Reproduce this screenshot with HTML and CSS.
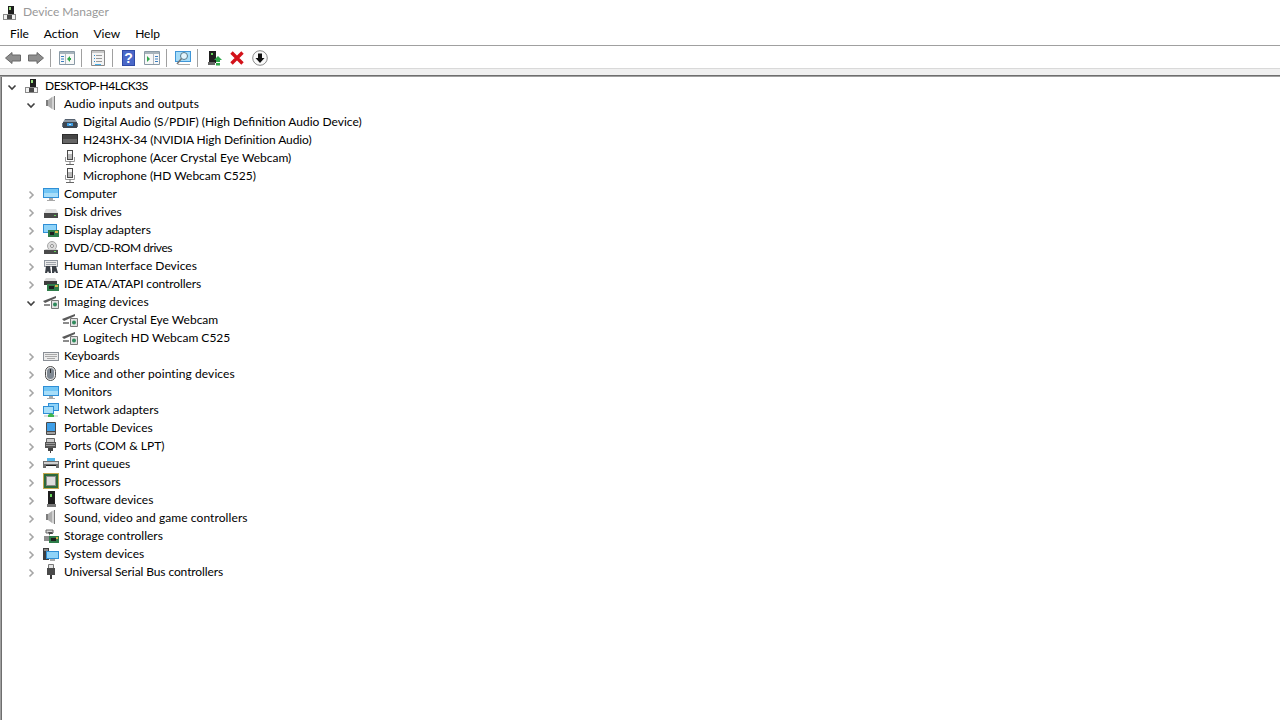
FILE: index.html
```html
<!DOCTYPE html>
<html lang="en">
<head>
<meta charset="utf-8">
<title>Device Manager</title>
<link rel="stylesheet" href="styles.css">
</head>
<body>
<svg class="defs" aria-hidden="true">
<defs>
<symbol id="c-closed" viewBox="0 0 16 16"><path d="M6.500 4.500L10 8l-3.500 3.500" fill="none" stroke="#a6a6a6" stroke-width="1.600"/></symbol>
<symbol id="c-open" viewBox="0 0 16 16"><path d="M4.500 6.500L8 10l3.500-3.500" fill="none" stroke="#404040" stroke-width="1.600"/></symbol>
<symbol id="i-pc" viewBox="0 0 16 16"><path d="M6 2h6v8H6z" fill="#1e1e1e"/><path d="M7 3h2v3H7z" fill="#9adf7f"/><path d="M1 10h13v6H1z" fill="#8a8a8a"/><path d="M2 11h3v4H2zM10 11h3v4h-3z" fill="#f2f2f2"/><path d="M5 11h5v4H5z" fill="#4b4b4b"/></symbol>
<symbol id="i-speaker" viewBox="0 0 16 16"><path d="M3 5h2v6H3z" fill="#7d7d7d"/><path d="M5 5l4-3v12l-4-3z" fill="#aeaeae"/><path d="M9 2l3-1v14l-3-1z" fill="#d2d2d2"/><path d="M11 1h1v14h-1z" fill="#7d7d7d"/></symbol>
<symbol id="i-digital" viewBox="0 0 16 16"><path d="M3 6h10l2 3H1z" fill="#8c98a4"/><path d="M3 6h10v1H3z" fill="#566270"/><path d="M1 9h14v6H1z" fill="#3e4852"/><path d="M0 10h1v4H0zM15 10h1v4h-1z" fill="#6b7682"/><path d="M5 10h6v3H5z" fill="#3d9be0"/><path d="M7 11h2v1H7z" fill="#bfe3fa"/></symbol>
<symbol id="i-hdmi" viewBox="0 0 16 16"><path d="M0 3h16v10H0z" fill="#2e2e2e"/><path d="M1 4h14v4H1z" fill="#454545"/><path d="M1 8h14v4H1z" fill="#666"/></symbol>
<symbol id="i-mic" viewBox="0 0 16 16"><path d="M5 1h6v10H5z" fill="#4a4a4a"/><path d="M6 2h4v3H6z" fill="#f6f6f6"/><path d="M6 5h4v5H6z" fill="#b9b9b9"/><path d="M3.500 8v4.500h9V8" fill="none" stroke="#9a9a9a"/><path d="M8 12v3" stroke="#777"/><path d="M4 15.500h8" stroke="#666"/></symbol>
<symbol id="i-computer" viewBox="0 0 16 16"><path d="M0 3h16v10H0z" fill="#2f8fd6"/><path d="M1 4h14v4H1z" fill="#73c6f5"/><path d="M1 8h14v4H1z" fill="#a8def9"/><path d="M6 13h4v2h2v1H4v-1h2z" fill="#a8a8a8"/></symbol>
<symbol id="i-disk" viewBox="0 0 16 16"><path d="M3 6h10l2 4H1z" fill="#e0e0e0"/><path d="M1 10h14v5H1z" fill="#4a4a4a"/><path d="M11 12h2v1h-2z" fill="#65d35a"/></symbol>
<symbol id="i-display" viewBox="0 0 16 16"><path d="M0 3h14v9H0z" fill="#2f8fd6"/><path d="M1 4h12v7H1z" fill="#8fd3f8"/><path d="M5 9h11v7H5z" fill="#2f7d4a"/><path d="M7 11h4v3H7z" fill="#1e1e1e"/><path d="M12 10h3v2h-3z" fill="#d9b64a"/></symbol>
<symbol id="i-dvd" viewBox="0 0 16 16"><circle cx="9" cy="7" r="4.500" fill="#dedede" stroke="#a8a8a8"/><circle cx="9" cy="7" r="1.500" fill="#fff" stroke="#8c8c8c"/><path d="M3 10h10l2 1H1z" fill="#ccc"/><path d="M1 11h14v4H1z" fill="#4a4a4a"/><path d="M11 12h2v1h-2z" fill="#65d35a"/></symbol>
<symbol id="i-hid" viewBox="0 0 16 16"><path d="M1 3h14v7H1z" fill="#8e959e"/><path d="M2 4h12v5H2z" fill="#e9e9e9"/><path d="M3 5h10v1H3zM3 7h10v1H3z" fill="#9fa4ab"/><path d="M3 9h4l1 7H6l-1-2-1 2H2zM9 9h4l2 7h-2l-1-2-1 2H9z" fill="#3a3f46"/></symbol>
<symbol id="i-ide" viewBox="0 0 16 16"><path d="M3 3h9l2 3H1z" fill="#dcdcdc"/><path d="M1 6h13v4H1z" fill="#3e3e3e"/><path d="M4 9h12v7H4z" fill="#2f7d4a"/><path d="M6 11h5v3H6z" fill="#1e1e1e"/><path d="M12 10h3v2h-3z" fill="#d9b64a"/></symbol>
<symbol id="i-cam" viewBox="0 0 16 16"><path d="M0 8L13 3v2L2 10z" fill="#5a5a5a"/><path d="M1 11h6v2H1z" fill="#8c8c8c"/><path d="M8.500 7.500h7v8h-7z" fill="#e2e2e2" stroke="#777"/><circle cx="12" cy="11.500" r="2" fill="#2f8a5c"/></symbol>
<symbol id="i-kbd" viewBox="0 0 16 16"><path d="M0 5h16v9H0z" fill="#8a8f96"/><path d="M1 6h14v7H1z" fill="#ececec"/><path d="M2 7h12v1H2zM2 9h12v1H2zM4 11h8v1H4z" fill="#a8a8a8"/></symbol>
<symbol id="i-mouse" viewBox="0 0 16 16"><rect x="2.500" y="1.500" width="10" height="14" rx="5" fill="#eee" stroke="#4a4a4a"/><rect x="4" y="3" width="7" height="11" rx="3.500" fill="#7f8892"/><path d="M7 4h1v4H7z" fill="#2a2a2a"/></symbol>
<symbol id="i-monitor" viewBox="0 0 16 16"><path d="M0 3h16v10H0z" fill="#2f8fd6"/><path d="M1 4h14v4H1z" fill="#73c6f5"/><path d="M1 8h14v4H1z" fill="#a8def9"/><path d="M6 13h4v2h2v1H4v-1h2z" fill="#a8a8a8"/></symbol>
<symbol id="i-net" viewBox="0 0 16 16"><path d="M5 2h11v8H5z" fill="#2f8fd6"/><path d="M6 3h9v6H6z" fill="#8fd3f8"/><path d="M0 5h11v8H0z" fill="#2f8fd6"/><path d="M1 6h9v6H1z" fill="#a8def9"/><path d="M1 14h14v2H1z" fill="#ddd"/><path d="M8 12l3 2v2H5v-2z" fill="#3fb54d"/></symbol>
<symbol id="i-portable" viewBox="0 0 16 16"><rect x="3" y="3" width="10" height="13" rx="1" fill="#4a4a4a"/><path d="M4 4h8v8H4z" fill="#3f9fe8"/><path d="M4 13h8v2H4z" fill="#a0a0a0"/></symbol>
<symbol id="i-port" viewBox="0 0 16 16"><path d="M3.500 1.500h8v4h-8z" fill="#ccc" stroke="#666"/><path d="M2 5h11v6H2z" fill="#555"/><path d="M3 6h9v1H3zM3 8h9v1H3z" fill="#999"/><path d="M5 11h5v3H5z" fill="#444"/><path d="M7 14h1v2H7z" fill="#444"/></symbol>
<symbol id="i-print" viewBox="0 0 16 16"><path d="M4 3h8v4H4z" fill="#4fb6ea"/><path d="M0 6h16v7H0z" fill="#6f6f6f"/><path d="M1 7h14v2H1z" fill="#d0d0d0"/><path d="M3 10h10v4H3z" fill="#fafafa"/><path d="M3 10h10v1H3z" fill="#1e1e1e"/></symbol>
<symbol id="i-cpu" viewBox="0 0 16 16"><path d="M0 0h16v16H0z" fill="#c3a84e"/><path d="M1 1h14v14H1z" fill="#2d6a3c"/><path d="M3 3h10v10H3z" fill="#8a8a8a"/><path d="M4 4h8v8H4z" fill="#dedede"/></symbol>
<symbol id="i-soft" viewBox="0 0 16 16"><path d="M5 0h7v14H5z" fill="#1e1e1e"/><path d="M7 3h2v3H7z" fill="#65d35a"/><path d="M4 13h9v3H4z" fill="#777"/></symbol>
<symbol id="i-storage" viewBox="0 0 16 16"><path d="M3 3h7v3H3z" fill="#d8d8d8" stroke="#666"/><path d="M5 5h4l1 2H7v2z" fill="#4a4a4a"/><path d="M1 9h6v5H1z" fill="#8c8c8c"/><path d="M6 9h10v7H6z" fill="#2f7d4a"/><path d="M8 11h5v3H8z" fill="#1e1e1e"/><path d="M13 10h2v2h-2z" fill="#d9b64a"/></symbol>
<symbol id="i-system" viewBox="0 0 16 16"><path d="M0 3h6v12H0z" fill="#3e3e3e"/><path d="M1 4h4v2H1z" fill="#8c8c8c"/><path d="M3 6h13v8H3z" fill="#2f8fd6"/><path d="M4 7h11v6H4z" fill="#8fd3f8"/><path d="M7 14h5v2H7z" fill="#aaa"/></symbol>
<symbol id="i-usb" viewBox="0 0 16 16"><path d="M5.500 1.500h5v4h-5z" fill="#e4e4e4" stroke="#777"/><path d="M4 5h8v7H4z" fill="#4a4a4a"/><path d="M7 12h2v4H7z" fill="#3a3a3a"/></symbol>
<symbol id="t-back" viewBox="0 0 16 16"><path d="M.5 8L7 2.500V5h8.500v6H7v2.500z" fill="#8e8e8e" stroke="#696969"/></symbol>
<symbol id="t-fwd" viewBox="0 0 16 16"><path d="M15.500 8L9 2.500V5H.5v6H9v2.500z" fill="#8e8e8e" stroke="#696969"/></symbol>
<symbol id="t-tree-l" viewBox="0 0 16 16"><path d="M.5 1.500h15v13H.5z" fill="#f8f8f8" stroke="#8a9aa6"/><path d="M1 2h14v2H1z" fill="#a8b4bc"/><path d="M2 6h3v1H2zM2 8.500h3v1H2zM2 11h3v1H2z" fill="#3a7fc0"/><path d="M6.500 4v10" stroke="#b0b8c0"/><path d="M8 9l3-3v6z" fill="#2fa84a"/><path d="M11 8h1v2h-1z" fill="#2fa84a"/></symbol>
<symbol id="t-props" viewBox="0 0 16 16"><path d="M1.500 .5h13v15h-13z" fill="#f4f4f4" stroke="#8a8a8a"/><path d="M2 1h12v2H2z" fill="#c8c8c8"/><path d="M4 5h1v1H4zM4 8h1v1H4zM4 11h1v1H4z" fill="#2a8fd0"/><path d="M6 5h6v1H6zM6 8h6v1H6zM6 11h6v1H6z" fill="#999"/><path d="M5 14h6v1H5z" fill="#4ab0e8"/></symbol>
<symbol id="t-help" viewBox="0 0 16 16"><path d="M1 0h13v16H1z" fill="#2f4aa6"/><path d="M2 1h11v14H2z" fill="#4a68c8"/></symbol>
<symbol id="t-tree-r" viewBox="0 0 16 16"><path d="M.5 1.500h15v13H.5z" fill="#f8f8f8" stroke="#8a9aa6"/><path d="M1 2h14v2H1z" fill="#a8b4bc"/><path d="M11 6h3v1h-3zM11 8.500h3v1h-3zM11 11h3v1h-3z" fill="#3a7fc0"/><path d="M9.500 4v10" stroke="#b0b8c0"/><path d="M3 6l3 3-3 3z" fill="#2fa84a"/></symbol>
<symbol id="t-scan" viewBox="0 0 16 16"><path d="M0 1h16v11H0z" fill="#3f96d8"/><path d="M1 2h14v9H1z" fill="#a5dcf8"/><circle cx="9" cy="6" r="3.500" fill="#e2f4fc" stroke="#5a7a8a"/><path d="M6.500 8.500L2 14" stroke="#777" stroke-width="1.500"/><path d="M3 14h12v1H3z" fill="#aaa"/></symbol>
<symbol id="t-update" viewBox="0 0 16 16"><path d="M3 1h7v12H3z" fill="#1e1e1e"/><path d="M5 3h2v2H5z" fill="#65d35a"/><path d="M2 12h7v3H2z" fill="#666"/><path d="M12 6l4 4h-2v2h-4v-2H8z" fill="#2fa84a"/><path d="M10 13h4v2.500h-4z" fill="#2fa84a"/></symbol>
<symbol id="t-remove" viewBox="0 0 16 16"><path d="M2.500 2.500l11 11m0-11l-11 11" stroke="#d3121a" stroke-width="3.400"/></symbol>
<symbol id="t-disable" viewBox="0 0 16 16"><circle cx="8" cy="8" r="7.300" fill="#fafafa" stroke="#8a8a8a"/><path d="M6 3.500h4V8h2.500L8 13 3.500 8H6z" fill="#111"/></symbol>
</defs>
</svg>

<div class="window">
  <header class="titlebar">
    <svg class="ticon"><use href="#i-pc"/></svg>
    <span class="title">Device Manager</span>
  </header>
  <nav class="menubar">
    <span>File</span><span>Action</span><span>View</span><span>Help</span>
  </nav>
  <div class="toolbar">
    <button class="tb"><svg><use href="#t-back"/></svg></button>
    <button class="tb"><svg><use href="#t-fwd"/></svg></button>
    <i class="sep"></i>
    <button class="tb"><svg><use href="#t-tree-l"/></svg></button>
    <i class="sep"></i>
    <button class="tb"><svg><use href="#t-props"/></svg></button>
    <i class="sep"></i>
    <button class="tb help"><svg><use href="#t-help"/></svg><span>?</span></button>
    <button class="tb"><svg><use href="#t-tree-r"/></svg></button>
    <i class="sep"></i>
    <button class="tb"><svg><use href="#t-scan"/></svg></button>
    <i class="sep"></i>
    <button class="tb"><svg><use href="#t-update"/></svg></button>
    <button class="tb"><svg><use href="#t-remove"/></svg></button>
    <button class="tb"><svg><use href="#t-disable"/></svg></button>
  </div>
  <div class="strip"></div>
  <main class="tree">
    <ul class="root">
      <li><div class="row"><svg class="tw"><use href="#c-open"/></svg><svg><use href="#i-pc"/></svg><span class="tighter">DESKTOP-H4LCK3S</span></div>
        <ul>
          <li><div class="row"><svg class="tw"><use href="#c-open"/></svg><svg><use href="#i-speaker"/></svg><span class="loose">Audio inputs and outputs</span></div>
            <ul>
              <li><div class="row"><i class="tw"></i><svg><use href="#i-digital"/></svg><span>Digital Audio (S/PDIF) (High Definition Audio Device)</span></div></li>
              <li><div class="row"><i class="tw"></i><svg><use href="#i-hdmi"/></svg><span class="tight">H243HX-34 (NVIDIA High Definition Audio)</span></div></li>
              <li><div class="row"><i class="tw"></i><svg><use href="#i-mic"/></svg><span>Microphone (Acer Crystal Eye Webcam)</span></div></li>
              <li><div class="row"><i class="tw"></i><svg><use href="#i-mic"/></svg><span>Microphone (HD Webcam C525)</span></div></li>
            </ul>
          </li>
          <li><div class="row"><svg class="tw"><use href="#c-closed"/></svg><svg><use href="#i-computer"/></svg><span>Computer</span></div></li>
          <li><div class="row"><svg class="tw"><use href="#c-closed"/></svg><svg><use href="#i-disk"/></svg><span>Disk drives</span></div></li>
          <li><div class="row"><svg class="tw"><use href="#c-closed"/></svg><svg><use href="#i-display"/></svg><span>Display adapters</span></div></li>
          <li><div class="row"><svg class="tw"><use href="#c-closed"/></svg><svg><use href="#i-dvd"/></svg><span class="tighter">DVD/CD-ROM drives</span></div></li>
          <li><div class="row"><svg class="tw"><use href="#c-closed"/></svg><svg><use href="#i-hid"/></svg><span>Human Interface Devices</span></div></li>
          <li><div class="row"><svg class="tw"><use href="#c-closed"/></svg><svg><use href="#i-ide"/></svg><span class="tight">IDE ATA/ATAPI controllers</span></div></li>
          <li><div class="row"><svg class="tw"><use href="#c-open"/></svg><svg><use href="#i-cam"/></svg><span class="loose">Imaging devices</span></div>
            <ul>
              <li><div class="row"><i class="tw"></i><svg><use href="#i-cam"/></svg><span>Acer Crystal Eye Webcam</span></div></li>
              <li><div class="row"><i class="tw"></i><svg><use href="#i-cam"/></svg><span>Logitech HD Webcam C525</span></div></li>
            </ul>
          </li>
          <li><div class="row"><svg class="tw"><use href="#c-closed"/></svg><svg><use href="#i-kbd"/></svg><span>Keyboards</span></div></li>
          <li><div class="row"><svg class="tw"><use href="#c-closed"/></svg><svg><use href="#i-mouse"/></svg><span class="loose">Mice and other pointing devices</span></div></li>
          <li><div class="row"><svg class="tw"><use href="#c-closed"/></svg><svg><use href="#i-monitor"/></svg><span>Monitors</span></div></li>
          <li><div class="row"><svg class="tw"><use href="#c-closed"/></svg><svg><use href="#i-net"/></svg><span>Network adapters</span></div></li>
          <li><div class="row"><svg class="tw"><use href="#c-closed"/></svg><svg><use href="#i-portable"/></svg><span>Portable Devices</span></div></li>
          <li><div class="row"><svg class="tw"><use href="#c-closed"/></svg><svg><use href="#i-port"/></svg><span>Ports (COM &amp; LPT)</span></div></li>
          <li><div class="row"><svg class="tw"><use href="#c-closed"/></svg><svg><use href="#i-print"/></svg><span>Print queues</span></div></li>
          <li><div class="row"><svg class="tw"><use href="#c-closed"/></svg><svg><use href="#i-cpu"/></svg><span>Processors</span></div></li>
          <li><div class="row"><svg class="tw"><use href="#c-closed"/></svg><svg><use href="#i-soft"/></svg><span>Software devices</span></div></li>
          <li><div class="row"><svg class="tw"><use href="#c-closed"/></svg><svg><use href="#i-speaker"/></svg><span class="loose">Sound, video and game controllers</span></div></li>
          <li><div class="row"><svg class="tw"><use href="#c-closed"/></svg><svg><use href="#i-storage"/></svg><span>Storage controllers</span></div></li>
          <li><div class="row"><svg class="tw"><use href="#c-closed"/></svg><svg><use href="#i-system"/></svg><span>System devices</span></div></li>
          <li><div class="row"><svg class="tw"><use href="#c-closed"/></svg><svg><use href="#i-usb"/></svg><span class="tight">Universal Serial Bus controllers</span></div></li>
        </ul>
      </li>
    </ul>
  </main>
</div>
</body>
</html>
```
FILE: styles.css
```css
* { box-sizing: border-box; }
html, body { margin: 0; height: 100%; overflow: hidden; background: #fff; }
body { font: 12px/18px Lato, "Noto Sans", sans-serif; color: #000; }
.defs { display: none; }
.window { height: 720px; display: flex; flex-direction: column; }
.titlebar { height: 23px; flex: none; display: flex; align-items: center; padding-left: 2px; }
.ticon { width: 16px; height: 16px; margin-right: 5px; }
.title { color: #999; }
.menubar { height: 22px; flex: none; display: flex; gap: 15px; align-items: center; padding-left: 10px; }
.toolbar { height: 23px; flex: none; display: flex; align-items: center; padding: 2px 0 0 1px; border-top: 1px solid #a0a0a0; background: #fff; }
.tb { position: relative; width: 23px; height: 20px; padding: 0; border: 0; background: none; display: flex; align-items: center; justify-content: center; }
.tb svg { width: 16px; height: 16px; }
.help span { position: absolute; inset: 0; color: #fff; font: bold 14px/20px "Liberation Sans", sans-serif; text-align: center; }
.sep { width: 8px; height: 18px; flex: none; background: linear-gradient(#a0a0a0, #a0a0a0) 3px 0 / 1px 100% no-repeat; }
.strip { height: 8px; flex: none; background: #f0f0f0; border-top: 1px solid #d9d9d9; border-bottom: 1px solid #6e6e6e; }
.tree { flex: 1; box-shadow: inset 1px 1px 0 #a0a0a0, inset 2px 0 0 #6e6e6e; }
.tree ul { list-style: none; margin: 0; padding: 0 0 0 19px; }
.tree .root { padding-left: 4px; }
.row { height: 18px; display: flex; align-items: center; white-space: nowrap; }
.row svg { width: 16px; height: 16px; flex: none; margin-right: 5px; }
.row span { padding-top: 2px; }
.row .tw { width: 16px; height: 16px; flex: none; margin: 4px 4px 0 0; }
.tight { letter-spacing: -0.1px; }
.tighter { letter-spacing: -0.45px; }
.loose { letter-spacing: 0.09px; }
```
